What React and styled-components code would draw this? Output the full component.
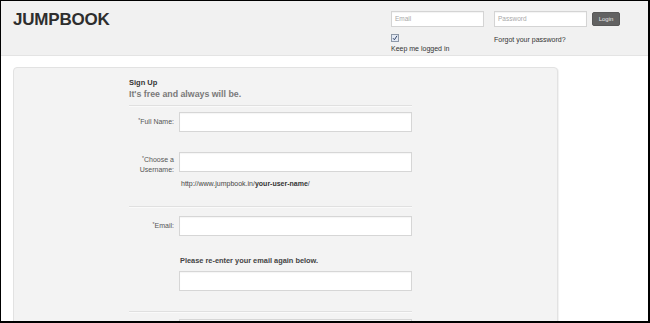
import React from "react";
import styled, { createGlobalStyle } from "styled-components";

const Global = createGlobalStyle`
  html, body { margin: 0; padding: 0; background: #fff; }
  body { font-family: "Liberation Sans", Arial, sans-serif; }
  * { box-sizing: border-box; }
`;

const Frame = styled.div`
  height: 100vh;
  overflow: hidden;
  border-style: solid;
  border-color: #000;
  border-width: 1px 2px 2px 1px;
  background: #fff;
`;

const Header = styled.header`
  display: flex;
  align-items: flex-start;
  height: 55px;
  padding: 10px 28px 0 12px;
  background: #f1f1f1;
  border-bottom: 1px solid #e4e4e4;
`;

const Logo = styled.div`
  font-size: 17px;
  line-height: 17px;
  font-weight: bold;
  letter-spacing: -0.2px;
  color: #2e2e2e;
`;

const LoginForm = styled.div`
  display: flex;
  align-items: flex-start;
  margin-left: auto;
`;

const LoginCol = styled.div`
  display: flex;
  flex-direction: column;
  width: 93px;
  margin-right: ${(p) => p.$gap || 0}px;
`;

const SmallInput = styled.div`
  height: 16px;
  background: #fff;
  border: 1px solid #d4d4d4;
  box-shadow: inset 0 1px 1px rgba(0, 0, 0, 0.05);
  font-size: 6.5px;
  line-height: 14px;
  padding-left: 3px;
  color: #a8a8a8;
`;

const Check = styled.span`
  display: flex;
  align-items: center;
  justify-content: center;
  width: 8px;
  height: 8px;
  margin-top: 7px;
  border: 1px solid #8e99a8;
  background: #e3e9f3;
`;

const SmallText = styled.div`
  font-size: 7px;
  line-height: 9px;
  color: #333;
  margin-top: ${(p) => p.$mt || 0}px;
  white-space: nowrap;
`;

const LoginButton = styled.div`
  width: 28px;
  height: 14px;
  margin-top: 1px;
  border-radius: 2px;
  background: #626262;
  border: 1px solid #585858;
  color: #e8e8e8;
  font-size: 6px;
  line-height: 12px;
  text-align: center;
`;

const Panel = styled.div`
  margin: 11px 0 0 12px;
  width: 545px;
  height: 400px;
  background: #f3f3f3;
  border: 1px solid #e2e2e2;
  border-radius: 4px;
  box-shadow: 1px 1px 1px rgba(0, 0, 0, 0.06);
  padding: 9px 0 0 115px;
`;

const FormCol = styled.div`
  width: 283px;
  display: flex;
  flex-direction: column;
`;

const Title = styled.div`
  font-size: 7.5px;
  line-height: 11px;
  font-weight: bold;
  color: #333;
`;

const Subtitle = styled.div`
  font-size: 8.8px;
  line-height: 12px;
  font-weight: bold;
  color: #7a7a7a;
`;

const Separator = styled.div`
  height: 2px;
  border-top: 1px solid #e0e0e0;
  border-bottom: 1px solid #fafafa;
  margin-top: ${(p) => p.$mt || 0}px;
`;

const Row = styled.div`
  display: grid;
  grid-template-columns: 45px 233px;
  align-items: start;
  column-gap: 5px;
  margin-top: ${(p) => p.$mt || 0}px;
`;

const Label = styled.div`
  height: 20px;
  text-align: right;
  font-size: 7px;
  line-height: ${(p) => p.$lh || 9}px;
  padding-top: ${(p) => p.$pt || 0}px;
  color: #555;
`;

const Star = styled.span`
  font-size: 5px;
  vertical-align: 2px;
  line-height: 0;
`;

const Field = styled.div`
  height: 20px;
  background: #fff;
  border: 1px solid #d6d6d6;
  box-shadow: inset 0 1px 1px rgba(0, 0, 0, 0.04);
  grid-column: ${(p) => p.$col || "auto"};
`;

const Hint = styled.div`
  grid-column: 2;
  font-size: 7px;
  line-height: 10px;
  color: #444;
  padding-left: 2px;
  b { color: #333; }
`;

const Note = styled.div`
  grid-column: 2;
  font-size: 7.4px;
  line-height: 10px;
  font-weight: bold;
  color: #444;
  padding-left: 1px;
`;

export default function App() {
  return (
    <>
      <Global />
      <Frame>
        <Header>
          <Logo>JUMPBOOK</Logo>
          <LoginForm>
            <LoginCol $gap={10}>
              <SmallInput>Email</SmallInput>
              <Check>
                <svg width="6" height="6" viewBox="0 0 6 6">
                  <path d="M1 3.2 L2.4 4.8 L5 0.8" fill="none" stroke="#33466a" strokeWidth="1" />
                </svg>
              </Check>
              <SmallText $mt={2}>Keep me logged in</SmallText>
            </LoginCol>
            <LoginCol $gap={5}>
              <SmallInput>Password</SmallInput>
              <SmallText $mt={8}>Forgot your password?</SmallText>
            </LoginCol>
            <LoginButton>Login</LoginButton>
          </LoginForm>
        </Header>
        <Panel>
          <FormCol>
            <Title>Sign Up</Title>
            <Subtitle>It's free and always will be.</Subtitle>
            <Separator $mt={5} />
            <Row $mt={5}>
              <Label $pt={5}><Star>*</Star>Full Name:</Label>
              <Field />
            </Row>
            <Row $mt={20}>
              <Label $pt={3} $lh={10}><Star>*</Star>Choose a Username:</Label>
              <Field />
            </Row>
            <Row $mt={7}>
              <Hint>http://www.jumpbook.in/<b>your-user-name</b>/</Hint>
            </Row>
            <Separator $mt={17} />
            <Row $mt={8}>
              <Label $pt={5}><Star>*</Star>Email:</Label>
              <Field />
            </Row>
            <Row $mt={20}>
              <Note>Please re-enter your email again below.</Note>
            </Row>
            <Row $mt={5}>
              <Field $col={2} />
            </Row>
            <Separator $mt={20} />
            <Row $mt={6}>
              <Field $col={2} />
            </Row>
          </FormCol>
        </Panel>
      </Frame>
    </>
  );
}
